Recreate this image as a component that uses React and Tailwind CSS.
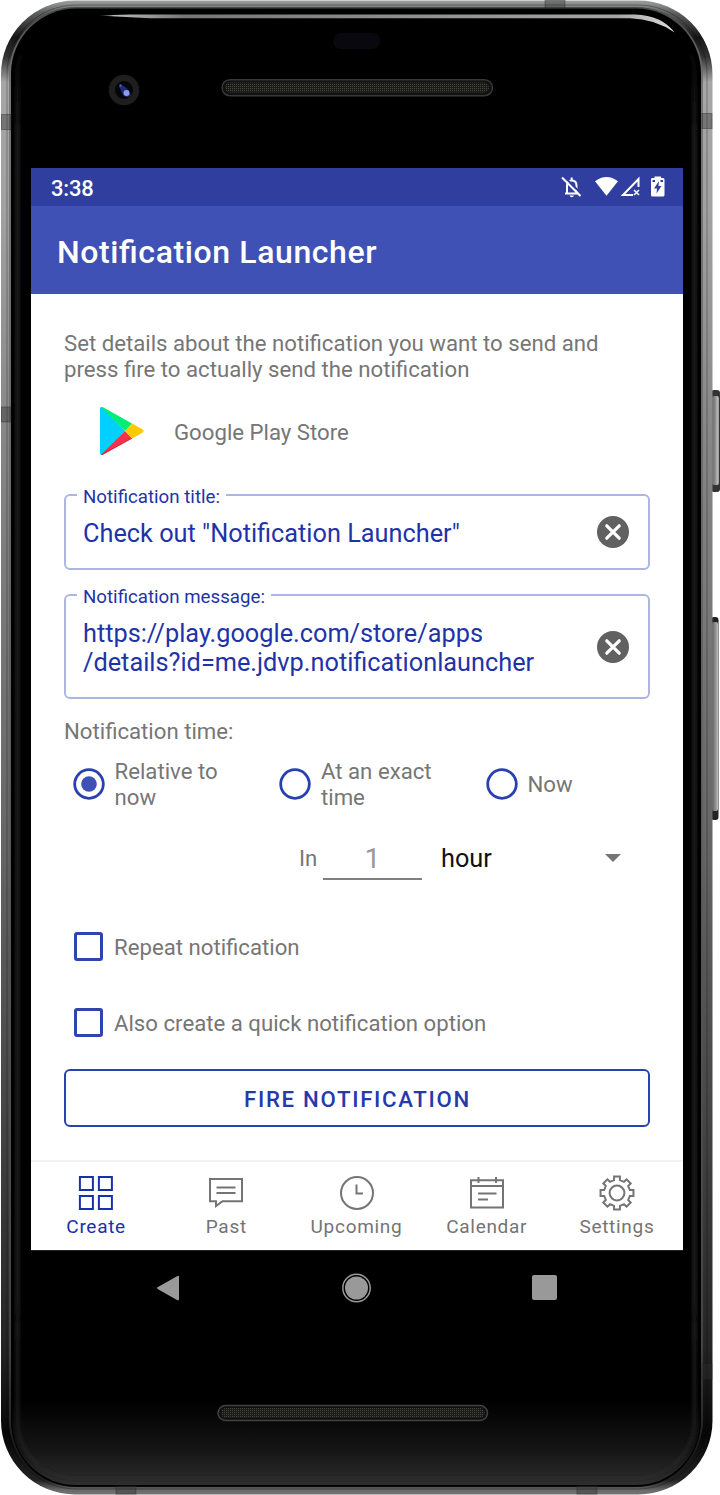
import React from "react";

function PhoneBody() {
  return (
    <svg className="absolute inset-0" width="720" height="1495" viewBox="0 0 720 1495" fill="none" aria-hidden="true">
      <defs>
        <linearGradient id="rim" x1="0" y1="0" x2="0" y2="1495" gradientUnits="userSpaceOnUse">
          <stop offset="0" stopColor="#a0a3a2" />
          <stop offset="0.009" stopColor="#5c5d5d" />
          <stop offset="0.025" stopColor="#161616" />
          <stop offset="0.038" stopColor="#333" />
          <stop offset="0.055" stopColor="#a5a6a5" />
          <stop offset="0.14" stopColor="#a0a1a0" />
          <stop offset="0.3" stopColor="#858585" />
          <stop offset="0.55" stopColor="#686868" />
          <stop offset="0.75" stopColor="#454545" />
          <stop offset="0.9" stopColor="#252525" />
          <stop offset="0.96" stopColor="#060606" />
          <stop offset="0.99" stopColor="#222" />
          <stop offset="0.997" stopColor="#6a6a6a" />
          <stop offset="1" stopColor="#777" />
        </linearGradient>
        <linearGradient id="ring" x1="0" y1="0" x2="0" y2="1495" gradientUnits="userSpaceOnUse">
          <stop offset="0" stopColor="#444" />
          <stop offset="0.06" stopColor="#777" />
          <stop offset="0.5" stopColor="#606060" />
          <stop offset="0.9" stopColor="#444" />
          <stop offset="0.99" stopColor="#111" />
        </linearGradient>
        <linearGradient id="glass" x1="0" y1="1400" x2="0" y2="1487" gradientUnits="userSpaceOnUse">
          <stop offset="0" stopColor="#000" />
          <stop offset="0.6" stopColor="#161616" />
          <stop offset="1" stopColor="#303030" />
        </linearGradient>
        <linearGradient id="shine" x1="97" y1="0" x2="675" y2="0" gradientUnits="userSpaceOnUse">
          <stop offset="0" stopColor="#999" stopOpacity="0" />
          <stop offset="0.03" stopColor="#bbb" />
          <stop offset="0.15" stopColor="#777" />
          <stop offset="0.9" stopColor="#a5a5a5" />
          <stop offset="1" stopColor="#ddd" />
        </linearGradient>
        <linearGradient id="key" x1="712" y1="0" x2="720" y2="0" gradientUnits="userSpaceOnUse">
          <stop offset="0" stopColor="#666" />
          <stop offset="0.4" stopColor="#8a8a8a" />
          <stop offset="0.7" stopColor="#b8b8b8" />
          <stop offset="1" stopColor="#777" />
        </linearGradient>
        <linearGradient id="edge" x1="0" y1="40" x2="0" y2="1487" gradientUnits="userSpaceOnUse">
          <stop offset="0" stopColor="#1f1f1f" stopOpacity="0" />
          <stop offset="0.07" stopColor="#1c1c1c" />
          <stop offset="0.85" stopColor="#1a1a1a" />
          <stop offset="0.97" stopColor="#1f1f1f" stopOpacity="0.6" />
          <stop offset="1" stopColor="#303030" stopOpacity="0" />
        </linearGradient>
        <filter id="soft" x="0" y="0" width="720" height="1495" filterUnits="userSpaceOnUse">
          <feGaussianBlur stdDeviation="1.800" />
        </filter>
        <pattern id="mesh" width="2" height="2" patternUnits="userSpaceOnUse">
          <rect width="2" height="2" fill="#1b1b18" />
          <rect width="1" height="1" fill="#45443e" />
        </pattern>
      </defs>
      <rect x="711" y="390" width="9" height="102" rx="3" fill="#333" />
      <rect x="712" y="396" width="7" height="89" rx="2" fill="url(#key)" />
      <rect x="711" y="617" width="7.500" height="203" rx="3" fill="#222" />
      <rect x="712" y="622" width="6" height="189" rx="2" fill="url(#key)" />
      <rect x="1" y="0.500" width="711.500" height="1494" rx="74" fill="url(#rim)" />
      <rect x="7" y="5" width="700" height="1484" rx="69" stroke="#000" strokeOpacity="0.3" />
      <rect x="9" y="7" width="694" height="1480" rx="67" fill="url(#ring)" />
      <rect x="11" y="8.500" width="690" height="1478" rx="65" fill="#000" />
      <rect x="12" y="10" width="688" height="1475" rx="64" fill="url(#glass)" />
      <rect x="17.500" y="16" width="677" height="1462" rx="58" stroke="url(#edge)" strokeWidth="4.500" filter="url(#soft)" />
      <path d="M97 15.500L130 14.500H635Q662 15.500 674.500 32.500Q655 19 630 18.300H150Z" fill="url(#shine)" />
      <g fill="#303030" fillOpacity="0.4" stroke="#222" strokeOpacity="0.4">
        <rect x="1.500" y="114.500" width="9.500" height="15" />
        <rect x="702" y="113.500" width="10" height="15" />
        <rect x="1.500" y="407" width="9.500" height="15" />
        <rect x="545" y="0.500" width="20" height="8" />
        <rect x="702" y="1364" width="10" height="15" />
        <rect x="116" y="1486" width="20" height="8" />
        <rect x="577" y="1486" width="20" height="8" />
      </g>
      <rect x="333" y="33" width="47" height="16" rx="8" fill="#08080e" />
      <circle cx="124" cy="90" r="15.300" fill="#1e1e1e" />
      <circle cx="124" cy="90" r="9" fill="#05050c" />
      <path d="M119 86Q124 84 128 90L131 95Q127 99 123 95Z" fill="#232b75" />
      <circle cx="126.500" cy="93" r="3" fill="#8c9af0" />
      <circle cx="120.500" cy="85.500" r="1.200" fill="#5360b8" />
      <rect x="222" y="79.700" width="270.500" height="16" rx="8" fill="#111" stroke="#383838" strokeWidth="1.500" />
      <rect x="225" y="82.500" width="264" height="10" rx="5" fill="url(#mesh)" />
      <rect x="218" y="1405.500" width="269.500" height="15" rx="7.500" fill="#111" stroke="#414141" strokeWidth="1.500" />
      <rect x="221" y="1408" width="263.500" height="10" rx="5" fill="url(#mesh)" />
    </svg>
  );
}

function StatusBar() {
  return (
    <div className="flex h-[38px] items-center justify-between bg-[#303f9f] pl-5 pr-[18.500px] text-white">
      <span className="pt-[3px] text-[22px] font-medium leading-none tracking-[-0.2px]">3:38</span>
      <svg width="104" height="24" viewBox="0 0 104 24" fill="none" aria-hidden="true">
        <path d="M4 18.500H17.500M6 18V10.500Q6 5.500 10.700 5.500Q15.500 5.500 15.500 10.500V18M10.700 5V2.500" stroke="#fff" strokeWidth="2" />
        <path d="M8.500 20.500H13Q12.500 22.300 10.700 22.300Q9 22.300 8.500 20.500Z" fill="#fff" />
        <path d="M2.500 1L21 19.500" stroke="#303f9f" strokeWidth="2" />
        <path d="M1 2.500L19.500 21" stroke="#fff" strokeWidth="2" />
        <path d="M34 6.300Q45.500 -2.500 57 6.300L45.500 20.700Z" fill="#fff" />
        <path d="M72 20H62L77.500 4V12" stroke="#fff" strokeWidth="2" />
        <path d="M73 15L78 20M78 15L73 20" stroke="#fff" strokeWidth="1.500" />
        <path d="M91 3H93.500V1.500H100V3H102Q103.500 3 103.500 4.500V20Q103.500 21.500 102 21.500H91.500Q90 21.500 90 20V4.500Q90 3 91 3Z" fill="#fff" />
        <path d="M98 6L93 13.500H96L95.500 18.500L100.500 11H97.500Z" fill="#303f9f" />
        <path d="M91.500 5H94V7H91.500ZM99.500 5H102V7H99.500Z" fill="#303f9f" />
      </svg>
    </div>
  );
}

function PlayLogo() {
  return (
    <svg width="44" height="48" viewBox="0 0 44 48" aria-hidden="true">
      <path d="M0 1Q0 0 2 0L25 24L2 48Q0 48 0 46Z" fill="#00d0ff" />
      <path d="M1 .3Q2-.3 4 .7L32 16.500L25 24Z" fill="#00ee76" />
      <path d="M1 47.800Q2 48.400 4 47L32 31.500L25 24Z" fill="#f43249" />
      <path d="M32 16.500L42 22Q45 24 42 26L32 31.500L25 24Z" fill="#ffc900" />
      <path d="M1 47.800Q2 48.400 4 47L32 31.500L31.500 31L3 46.500Z" fill="#c92a3b" />
    </svg>
  );
}

function ClearIcon() {
  return (
    <svg className="shrink-0" width="32" height="32" viewBox="0 0 32 32" aria-hidden="true">
      <circle cx="16" cy="16" r="16" fill="#616161" />
      <path d="M9.800 9.800L22.200 22.200M22.200 9.800L9.800 22.200" stroke="#fff" strokeWidth="3.200" strokeLinecap="round" />
    </svg>
  );
}

function Field({ label, className, children }) {
  return (
    <div className={"relative flex items-center justify-between rounded-[6px] border-2 border-[#adb5e3] pl-[17px] pr-[19px] text-[#1f33a8] " + className}>
      <span className="absolute -top-[10px] left-[11px] bg-white px-[6px] text-[18.700px] leading-[22px]">{label}</span>
      <div className="pt-[3px] text-[25.300px] leading-[29.500px]">{children}</div>
      <ClearIcon />
    </div>
  );
}

function Radio({ checked, children }) {
  return (
    <label className="flex w-[206.500px] shrink-0 items-center gap-[10px]">
      <svg className="shrink-0" width="32" height="32" viewBox="0 0 32 32" aria-hidden="true">
        <circle cx="16" cy="16" r="14.300" fill="none" stroke="#2840b0" strokeWidth="2.800" />
        {checked && <circle cx="16" cy="16" r="7.800" fill="#3f51b5" />}
      </svg>
      <span className="pt-px">{children}</span>
    </label>
  );
}

function CheckRow({ children }) {
  return (
    <label className="flex h-[76px] items-center gap-[11px] pl-[10px]">
      <span className="h-[29px] w-[29px] rounded-[3px] border-[3px] border-[#2e44b1]" />
      <span className="pt-[2px]">{children}</span>
    </label>
  );
}

const gear = (() => {
  const pts = [];
  for (let i = 0; i < 8; i++) {
    for (const [r, a] of [[13.2, -13], [16.7, -10], [16.7, 10], [13.2, 13]]) {
      const t = ((i * 45 + a - 90) * Math.PI) / 180;
      pts.push(`${(18 + r * Math.cos(t)).toFixed(2)},${(18 + r * Math.sin(t)).toFixed(2)}`);
    }
  }
  return pts.join(" ");
})();

const tabs = [
  { name: "Create", active: true, art: <path d="M1.900 1.900h13v13h-13zM20.900 1.900h13v13h-13zM1.900 20.900h13v13h-13zM20.900 20.900h13v13h-13z" /> },
  { name: "Past", art: <path d="M2 4H34V26.300H14.500L8 31V26.300H2ZM8.500 12.500H27.500M8.500 18H27.500" /> },
  { name: "Upcoming", art: <><circle cx="18" cy="18" r="16" /><path d="M17.500 9.500V18.500H24" /></> },
  { name: "Calendar", art: <path d="M2 5.300H34V32.500H2ZM2 11H34M9.500 2V8M27 2V8M9 18.500H27.500M9 24.500H19" /> },
  { name: "Settings", art: <><polygon points={gear} /><circle cx="18" cy="18" r="7.400" /></> },
];

function BottomNav() {
  return (
    <nav className="flex h-[90px] border-t-2 border-[#f3f3f3] pr-px">
      {tabs.map((t) => (
        <div key={t.name} className={"flex flex-1 flex-col items-center pt-[12.500px] " + (t.active ? "text-[#1a30ab]" : "text-[#747474]")}>
          <svg width="36" height="36" viewBox="0 0 36 36" fill="none" stroke="currentColor" strokeWidth="2" aria-hidden="true">
            {t.art}
          </svg>
          <span className="mt-[5.500px] text-[19px] leading-[22px] tracking-[0.7px]">{t.name}</span>
        </div>
      ))}
    </nav>
  );
}

function SystemNav() {
  return (
    <div className="flex h-[73px] items-center justify-between pl-[124.500px] pr-[126px]">
      <svg width="24" height="28" viewBox="0 0 24 28" aria-hidden="true">
        <path d="M2 13L21 2.200Q23 1 23 3V25Q23 27 21 26L2 15.200Q0 14 2 13Z" fill="#999" />
      </svg>
      <svg width="30" height="30" viewBox="0 0 30 30" aria-hidden="true">
        <circle cx="15.500" cy="15" r="13.700" fill="none" stroke="#999" strokeWidth="1.500" />
        <circle cx="15.500" cy="15" r="11.500" fill="#999" />
      </svg>
      <span className="h-[25px] w-[25px] rounded-[2px] bg-[#999]" />
    </div>
  );
}

export default function App() {
  return (
    <div className="relative h-[1495px] w-[720px] overflow-hidden bg-white font-['Roboto',sans-serif] [font-feature-settings:'liga'_1]">
      <PhoneBody />
      <div className="relative ml-[31px] w-[652px] pt-[168px]">
        <main className="flex h-[1083px] flex-col border-b border-[#202522] bg-white">
          <StatusBar />
          <header className="flex h-[88px] items-center bg-[#3f51b5] pl-[26px] pt-[3px]">
            <h1 className="text-[32px] font-medium leading-none tracking-[0.6px] text-white">Notification Launcher</h1>
          </header>
          <div className="flex-1 px-[33px] pt-[36px] text-[22.200px] leading-[26px] text-[#767676]">
            <p className="whitespace-nowrap">
              Set details about the notification you want to send and
              <br />
              press fire to actually send the notification
            </p>
            <div className="mt-[25px] flex h-12 items-center gap-[30px] pl-9">
              <PlayLogo />
              <span className="pt-px">Google Play Store</span>
            </div>
            <Field label="Notification title:" className="mt-[39px] h-[76px]">
              Check out "Notification Launcher"
            </Field>
            <Field label="Notification message:" className="mt-[24px] h-[105px]">
              https://play.google.com/store/apps
              <br />
              /details?id=me.jdvp.notificationlauncher
            </Field>
            <p className="mt-[19px]">Notification time:</p>
            <div className="mt-[13px] flex pl-[8.500px]">
              <Radio checked>Relative to<br />now</Radio>
              <Radio>At an exact<br />time</Radio>
              <Radio>Now</Radio>
            </div>
            <div className="mt-[21px] flex h-[50px] items-center pl-[235px]">
              <span className="w-[24px] pt-[3px]">In</span>
              <span className="flex h-[48px] w-[99px] items-center justify-center border-b-2 border-[#808080] pt-[7px] text-[28.500px] text-[#999]">1</span>
              <span className="ml-[19px] w-[164px] pt-[5px] text-[25.300px] text-[#111]">hour</span>
              <svg className="mt-[3px]" width="16" height="8" viewBox="0 0 16 8" aria-hidden="true">
                <path d="M0 0H16L8 8Z" fill="#757575" />
              </svg>
            </div>
            <div className="mt-[27px]">
              <CheckRow>Repeat notification</CheckRow>
              <CheckRow>Also create a quick notification option</CheckRow>
            </div>
            <button className="mt-[9px] flex h-[58px] w-full items-center justify-center rounded-[6px] border-2 border-[#2c41b0] pl-px pt-px text-[22.200px] font-medium tracking-[1.700px] text-[#2539ac]">
              FIRE NOTIFICATION
            </button>
          </div>
          <BottomNav />
        </main>
        <SystemNav />
      </div>
    </div>
  );
}
